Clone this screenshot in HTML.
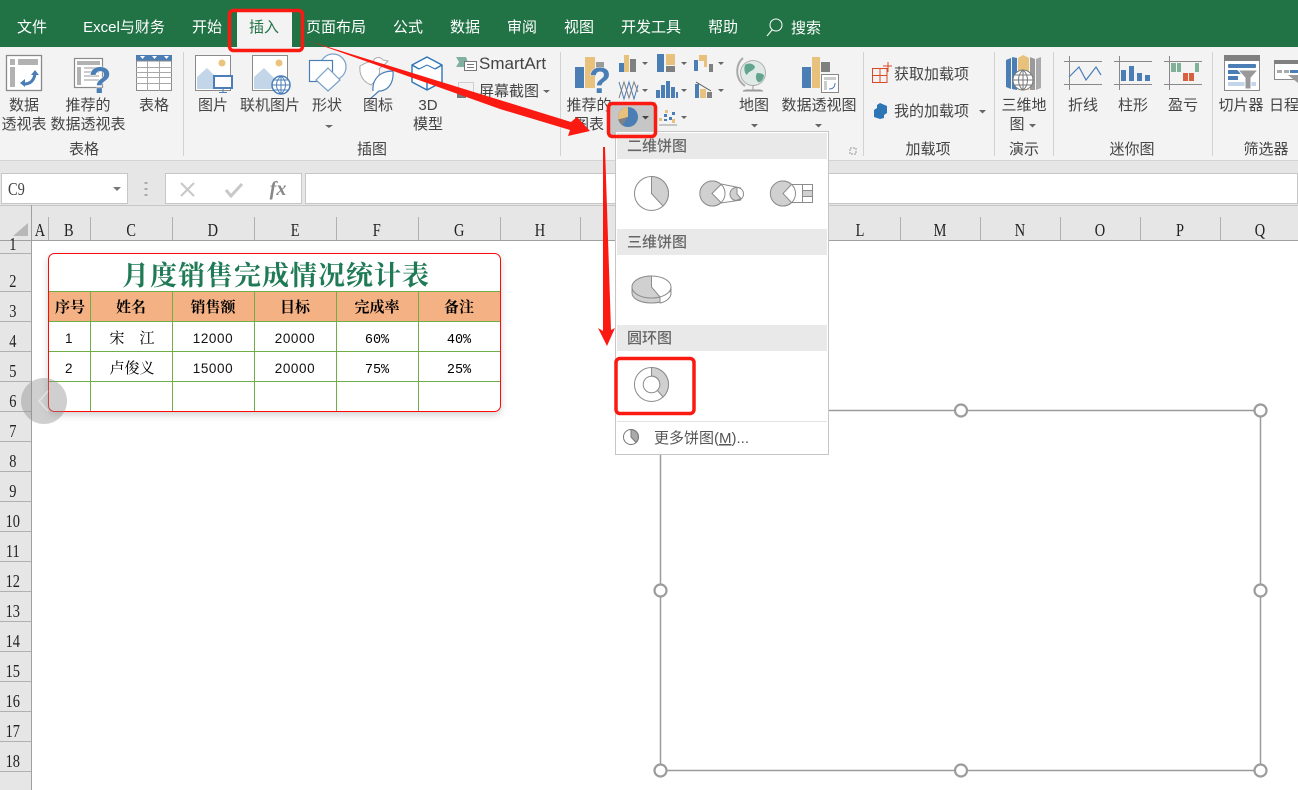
<!DOCTYPE html>
<html><head><meta charset="utf-8"><style>
html,body{margin:0;padding:0;background:#fff;width:1298px;height:790px;overflow:hidden}
svg{display:block}
text{font-family:"Liberation Sans","Noto Sans CJK SC",sans-serif;font-size:15px;fill:#444;text-anchor:middle}
.t{fill:#fff;font-size:15px}
.r{font-size:15px;fill:#444}
.s{font-family:"Liberation Serif","Noto Serif CJK SC",serif;font-size:18px;fill:#222}
.b{font-family:"Liberation Serif","Noto Serif CJK SC",serif;font-size:15px;fill:#000}
.n{font-size:13.5px;fill:#111;letter-spacing:.6px}
.d{font-family:"Liberation Mono",monospace;font-size:13.5px;fill:#000}
.h{font-family:"Liberation Serif","Noto Serif CJK SC",serif;font-size:15px;font-weight:700;fill:#000}
.m{font-size:15px;fill:#666;text-anchor:start;font-weight:500}
.l{text-anchor:start}
</style></head><body>
<svg width="1298" height="790" viewBox="0 0 1298 790" xmlns="http://www.w3.org/2000/svg">
<rect width="1298" height="790" fill="#fff"/>
<rect width="1298" height="47" fill="#217346"/>
<rect y="47" width="1298" height="113" fill="#f3f3f3"/>
<rect y="160" width="1298" height="45" fill="#e6e6e6"/>
<line x1="0" x2="1298" y1="160.500" y2="160.500" stroke="#d4d4d4"/>
<rect x="237" y="12" width="55" height="35" fill="#f3f3f3"/>

<!-- tabs -->
<text class="t" x="32" y="32">文件</text>
<text class="t" x="124" y="32">Excel与财务</text>
<text class="t" x="207" y="32">开始</text>
<text class="t" x="264" y="32" style="fill:#217346">插入</text>
<text class="t" x="336" y="32">页面布局</text>
<text class="t" x="408" y="32">公式</text>
<text class="t" x="465" y="32">数据</text>
<text class="t" x="522" y="32">审阅</text>
<text class="t" x="579" y="32">视图</text>
<text class="t" x="651" y="32">开发工具</text>
<text class="t" x="723" y="32">帮助</text>
<circle cx="776" cy="25" r="6" fill="none" stroke="#fff"/><line x1="772" y1="30" x2="767" y2="36" stroke="#fff"/>
<text class="t" x="806" y="33">搜索</text>

<!-- group separators -->
<g stroke="#d2d2d2"><line x1="183.500" x2="183.500" y1="52" y2="156"/><line x1="560.500" x2="560.500" y1="52" y2="156"/><line x1="863.500" x2="863.500" y1="52" y2="156"/><line x1="994.500" x2="994.500" y1="52" y2="156"/><line x1="1053.500" x2="1053.500" y1="52" y2="156"/><line x1="1212.500" x2="1212.500" y1="52" y2="156"/></g>

<!-- 数据透视表 icon -->
<rect x="6.500" y="55.500" width="35" height="35" fill="#fff" stroke="#8a8a8a" stroke-width="1.300"/>
<rect x="10" y="59" width="5" height="6" fill="#b2b2b2"/><rect x="18" y="59" width="20" height="6" fill="#b2b2b2"/><rect x="10" y="67" width="5" height="20" fill="#b2b2b2"/>
<path d="M24 84c7 0 10-4 11-10" fill="none" stroke="#4a7eb5" stroke-width="3"/><path d="M31 75l4-5 4 5zM20 83l5-4v8z" fill="#4a7eb5"/>
<!-- 推荐 icon -->
<rect x="74.500" y="58.500" width="28" height="29" fill="#fff" stroke="#8a8a8a" stroke-width="1.200"/>
<rect x="77" y="61" width="23" height="4" fill="#b2b2b2"/><rect x="77" y="67" width="4" height="18" fill="#b2b2b2"/><path d="M84 68h15M84 72h15M84 76h15M84 80h15" stroke="#ccc" stroke-width="2"/>
<text x="100" y="93" style="font-size:37px;font-weight:700;fill:#4a7eb5;stroke:#f3f3f3;stroke-width:1;paint-order:stroke">?</text>
<!-- 表格 icon -->
<rect x="136" y="55" width="36" height="6" fill="#4a7eb5"/>
<rect x="136.500" y="61" width="35" height="29.500" fill="#fff" stroke="#8a8a8a"/>
<path d="M136 67.500h36M136 72.500h36M136 77.500h36M136 83.500h36M147.500 61v30M159.500 61v30" stroke="#a8a8a8" fill="none"/>
<path d="M140 56h5l-2.500 3zM152 56h5l-2.500 3zM164 56h5l-2.500 3z" fill="#fff"/>

<!-- 图片 icon -->
<rect x="195.500" y="55.500" width="35" height="35" fill="#fff" stroke="#8a8a8a"/>
<path d="M197 89V77l10-9 12 12v9z" fill="#c3d5e8"/><circle cx="222" cy="63" r="3.500" fill="#ecc37e"/>
<rect x="214" y="76" width="18" height="12" fill="#fff" stroke="#4a7eb5" stroke-width="2"/><path d="M223 89v3M219 92.500h8" stroke="#4a7eb5"/>
<!-- 联机图片 -->
<rect x="252.500" y="55.500" width="35" height="35" fill="#fff" stroke="#8a8a8a"/>
<path d="M254 89V77l10-9 12 12v9z" fill="#c3d5e8"/><circle cx="279" cy="63" r="3.500" fill="#ecc37e"/>
<circle cx="281" cy="85" r="9" fill="#fff" stroke="#4a7eb5" stroke-width="1.500"/><path d="M272 85h18M274 80h14M274 90h14M281 76v18M281 76c-6 5-6 13 0 18M281 76c6 5 6 13 0 18" stroke="#4a7eb5" fill="none"/>
<!-- 形状 -->
<circle cx="333" cy="67" r="13" fill="#fff" stroke="#7ba0c8" stroke-width="1.200"/>
<rect x="309.500" y="60.500" width="23" height="21" fill="#fff" stroke="#4a7eb5" stroke-width="1.200"/>
<path d="M328 68l12 12-12 11-12-11z" fill="#fff" stroke="#7ba0c8" stroke-width="1.200"/>
<path d="M325 125l4 3 4-3z" fill="#666"/>
<!-- 图标 -->
<path d="M360 66c-1 10 4 16 11 19l4-4c5-6 5-10 4-12l6-5 3-3-5-1c-3-4-9-3-10 2-3-1-8 1-13 4z" fill="#fff" stroke="#aaa"/>
<path d="M373 91c-1-11 6-20 20-20 1 12-5 20-14 20l-9 8" fill="#fff" stroke="#4a7eb5" stroke-width="1.200"/>
<!-- 3D -->
<path d="M427 57l15 8v17l-15 8-15-8V65z M412 65l7 4M442 65l-7 4M427 82v8" fill="#fff" stroke="#2e75b6" stroke-width="1.400" stroke-linejoin="round"/>
<path d="M419 69l8-4 8 4" fill="none" stroke="#2e75b6" stroke-width="1"/>
<!-- SmartArt -->
<path d="M456 57h10l2 5-2 5h-10l3-5z" fill="#7fb0a0"/><rect x="464.500" y="61.500" width="12" height="9" fill="#fff" stroke="#777"/><path d="M467 64.500h7M467 67.500h7" stroke="#777"/>
<text class="r l" x="479" y="69" style="font-size:17px">SmartArt</text>
<rect x="458.500" y="82.500" width="15" height="14" fill="none" stroke="#aaa" stroke-dasharray="1 1"/>
<rect x="457" y="93" width="9" height="5" fill="#777"/>
<text class="r l" x="479" y="96">屏幕截图</text><path d="M543 90l3.500 3 3.500-3z" fill="#666"/>

<!-- ribbon labels -->
<text class="r" x="24" y="110">数据</text><text class="r" x="24" y="129">透视表</text>
<text class="r" x="88" y="110">推荐的</text><text class="r" x="88" y="129">数据透视表</text>
<text class="r" x="154" y="110">表格</text>
<text class="r" x="213" y="110">图片</text>
<text class="r" x="270" y="110">联机图片</text>
<text class="r" x="327" y="110">形状</text>
<text class="r" x="378" y="110">图标</text>
<text class="r" x="428" y="110">3D</text><text class="r" x="428" y="129">模型</text>
<text class="r" x="84" y="154">表格</text>
<text class="r" x="372" y="154">插图</text>

<!-- chart group -->
<rect x="575" y="67" width="9" height="21" fill="#4a7eb5"/><rect x="585" y="57" width="10" height="31" fill="#e8c27d"/><rect x="596" y="62" width="8" height="6" fill="#9a9a9a"/>
<text x="600" y="93" style="font-size:36px;font-weight:700;fill:#4a7eb5;stroke:#f3f3f3;stroke-width:1;paint-order:stroke">?</text>
<!-- small charts -->
<path d="M619 63h5v9h-5z" fill="#4a7eb5"/><path d="M624 55h5v17h-5z" fill="#e8c27d"/><path d="M630 59h6v13h-6z" fill="#808080"/>
<path d="M657 54h7v18h-7z" fill="#4a7eb5"/><path d="M666 54h9v11h-9z" fill="#e8c27d"/><path d="M666 66h9v6h-9z" fill="#808080"/>
<path d="M694 60h4v11h-4z" fill="#4a7eb5"/><path d="M699 55h5v6h-5zM704 55h3v12h-3z" fill="#e8c27d"/><path d="M709 64h4v8h-4z" fill="#808080"/>
<path d="M619 82l5 17 5-17 5 17 4-14" fill="none" stroke="#4a7eb5"/><path d="M619 98l5-16 5 16 5-16 4 10" fill="none" stroke="#808080"/>
<path d="M656 90h4v8h-4zM661 85h4v13h-4zM666 81h4v17h-4zM671 87h4v11h-4zM676 92h2v6h-2z" fill="#4a7eb5"/>
<path d="M695 84h4v14h-4z" fill="#4a7eb5"/><path d="M700 89h6v9h-6z" fill="#e8c27d"/><path d="M707 92h5v6h-5z" fill="#808080"/><path d="M696 82l15 9" stroke="#555"/>
<g fill="#666"><path d="M642 62h6l-3 3zM681 62h6l-3 3zM718 62h6l-3 3zM642 89h6l-3 3zM681 89h6l-3 3zM718 89h6l-3 3z"/></g>
<!-- scatter -->
<path d="M664 114h3v3h-3zM669 117h3v3h-3zM672 112h3v3h-3zM664 119h3v2h-3z" fill="#4a7eb5"/><path d="M659 118h3v3h-3zM665 110h3v3h-3zM672 119h3v4h-3z" fill="#e8c27d"/><path d="M659 125h18" stroke="#999"/>
<path d="M681 116h6l-3 3z" fill="#666"/>
<!-- pie highlighted -->
<rect x="608" y="102" width="48" height="35" fill="#c6c6c6"/>
<circle cx="628" cy="117" r="10" fill="#4a7eb5"/>
<path d="M628 117V107a10 10 0 0 0-9.600 12.500z" fill="#e8c27d"/><path d="M628 117l-9.600 2.500a10 10 0 0 0 4 5.800z" fill="#808080"/>
<path d="M642 116h7l-3.500 3.500z" fill="#444"/>
<text class="r" x="589" y="110">推荐的</text><text class="r" x="589" y="129">图表</text>

<!-- globe -->
<circle cx="753" cy="73" r="12.500" fill="#dfe9e6" stroke="#b0b0b0"/><path d="M745 65c4-3 9-1 10 2-1 4-7 4-8 8-3-2-3-7-2-10zM757 73c4 0 7 1 7 3-1 5-5 7-6 6-2-2-3-5-1-9z" fill="#62a58e"/>
<path d="M743 58c-7 6-9 20 2 28" fill="none" stroke="#aaa" stroke-width="2"/>
<path d="M746 90h14l3 1h-20zM753 85v5" stroke="#999" fill="#aaa"/>
<text class="r" x="754" y="110">地图</text><path d="M751 124h7l-3.500 3.500z" fill="#666"/>
<!-- pivot chart -->
<rect x="802" y="67" width="9" height="21" fill="#4a7eb5"/><rect x="812" y="57" width="8" height="31" fill="#e8c27d"/><rect x="821" y="62" width="9" height="10" fill="#808080"/>
<rect x="821.500" y="74.500" width="17" height="18" fill="#fff" stroke="#888"/><path d="M824 77h12v3h-12zM824 81h3v9h-3z" fill="#ccc"/><path d="M829 89c4 0 6-2 6-6" stroke="#4a7eb5" fill="none"/>
<text class="r" x="819" y="110">数据透视图</text><path d="M815 124h7l-3.500 3.500z" fill="#666"/>
<path d="M850 148h6v6h-6z" fill="none" stroke="#999" stroke-dasharray="2 1"/>

<!-- add-ins -->
<path d="M872 68.500h15M872.500 68v15M872 75.500h15M880 68v15M872 82.500h15M887 68v15M888 62v10M883 66h9" stroke="#d8492a" fill="none"/>
<text class="r l" x="894" y="79">获取加载项</text>
<path d="M880 103l7 3v7l-3 2v3l-4 1-6-2v-7l3-2v-3z" fill="#2e75b6"/>
<text class="r l" x="894" y="116">我的加载项</text><path d="M979 110h7l-3.500 3.500z" fill="#666"/>
<text class="r" x="928" y="154">加载项</text>

<!-- 3D map -->
<path d="M1006 60l5-2v31l-5-2z" fill="#4a7eb5"/><path d="M1012 57l5 1v32l-5-1z" fill="#4a7eb5"/><path d="M1018 58l5-3 6 3v32h-11z" fill="#e8c27d"/><path d="M1030 57l5 2v31h-5z" fill="#9a9a9a"/><path d="M1036 59l5-2v31l-5 2z" fill="#aaa"/>
<circle cx="1023" cy="80" r="10" fill="#fff" stroke="#777"/><path d="M1013 80h20M1015 75h16M1015 85h16M1023 70v20M1023 70c-6 5-6 15 0 20M1023 70c6 5 6 15 0 20" stroke="#777" fill="none"/>
<text class="r" x="1024" y="110">三维地</text><text class="r" x="1017" y="129">图</text><path d="M1029 124h7l-3.500 3.500z" fill="#666"/>
<text class="r" x="1024" y="154">演示</text>

<!-- sparklines -->
<g stroke="#888" fill="none">
<path d="M1064 61.500h38M1064 84.500h38M1069.500 56v34M1114 61.500h38M1114 84.500h38M1119.500 56v34M1164 61.500h38M1164 84.500h38M1169.500 56v34"/>
</g>
<path d="M1069 77l10-10 7 13 10-13 5 8" fill="none" stroke="#4a7eb5" stroke-width="1.200"/>
<path d="M1121 70h5v11h-5zM1129 66h5v15h-5zM1137 73h5v8h-5zM1145 75h5v6h-5z" fill="#4a7eb5"/>
<path d="M1171 63h5v9h-5zM1177 63h4v9h-4zM1195 63h4v9h-4z" fill="#7fb098"/><path d="M1183 73h5v8h-5zM1189 73h5v8h-5z" fill="#d8603c"/>
<text class="r" x="1083" y="110">折线</text><text class="r" x="1133" y="110">柱形</text><text class="r" x="1183" y="110">盈亏</text>
<text class="r" x="1132" y="154">迷你图</text>
<!-- slicer -->
<rect x="1224.500" y="55.500" width="35" height="35" fill="#fff" stroke="#8a8a8a"/><rect x="1224" y="55" width="36" height="6" fill="#808080"/>
<rect x="1228" y="64" width="28" height="4" rx="1" fill="#4a7eb5"/><rect x="1228" y="70" width="15" height="4" fill="#4a7eb5"/><rect x="1228" y="76" width="10" height="4" fill="#4a7eb5"/><rect x="1228" y="82" width="28" height="4" fill="#c3d5e8"/>
<path d="M1238 70h20l-7 8v11h-6V78z" fill="#999" stroke="#fff"/>
<text class="r" x="1241" y="110">切片器</text>
<rect x="1274.500" y="61.500" width="24" height="18" fill="#fff" stroke="#8a8a8a"/><rect x="1274" y="60" width="24" height="4" fill="#808080"/><path d="M1277 70h5v3h-5zM1284 70h5v3h-5z" fill="#aaa"/><path d="M1290 70h8v3h-8z" fill="#4a7eb5"/><path d="M1288 75h10v8z" fill="#999"/>
<text class="r l" x="1269" y="110">日程</text>
<text class="r" x="1266" y="154">筛选器</text>

<!-- formula bar -->
<rect x="1.500" y="173.500" width="126" height="30" fill="#fff" stroke="#c6c6c6"/>
<g transform="scale(.8 1)"><text class="s l" x="10" y="195" style="font-size:18px;fill:#444">C9</text></g>
<path d="M113 187h8l-4 4z" fill="#777"/>
<path d="M146 182v2M146 188v2M146 194v2" stroke="#aaa" stroke-width="3"/>
<rect x="165.500" y="173.500" width="136" height="30" fill="#fff" stroke="#c6c6c6"/>
<path d="M181 183l13 13M194 183l-13 13" stroke="#c8c8c8" stroke-width="2"/>
<path d="M226 190l5 6 11-12" fill="none" stroke="#c8c8c8" stroke-width="3"/>
<text x="278" y="195" style="font-family:'Liberation Serif',serif;font-style:italic;font-weight:700;font-size:20px;fill:#888">fx</text>
<rect x="305.500" y="173.500" width="992" height="30" fill="#fff" stroke="#c6c6c6"/>

<!-- column header -->
<rect y="205" width="1298" height="35" fill="#e6e6e6"/>
<line x1="0" x2="1298" y1="240.500" y2="240.500" stroke="#a0a0a0"/>
<line x1="0" x2="1298" y1="205.500" y2="205.500" stroke="#c6c6c6"/>
<path d="M13 236l15-13v13z" fill="#b8b8b8"/>
<path d="M31.500 217v23M48.500 217v23M90.500 217v23M172.500 217v23M254.500 217v23M336.500 217v23M418.500 217v23M500.500 217v23M580.500 217v23M660.500 217v23M740.500 217v23M820.500 217v23M900.500 217v23M980.500 217v23M1060.500 217v23M1140.500 217v23M1220.500 217v23" stroke="#b0b0b0"/>
<g transform="scale(.8 1)">
<text class="s" x="50" y="236">A</text><text class="s" x="86" y="236">B</text><text class="s" x="164" y="236">C</text><text class="s" x="266" y="236">D</text><text class="s" x="369" y="236">E</text><text class="s" x="471" y="236">F</text><text class="s" x="574" y="236">G</text><text class="s" x="675" y="236">H</text><text class="s" x="1075" y="236">L</text><text class="s" x="1175" y="236">M</text><text class="s" x="1275" y="236">N</text><text class="s" x="1375" y="236">O</text><text class="s" x="1475" y="236">P</text><text class="s" x="1575" y="236">Q</text>
</g>
<!-- row header -->
<rect y="241" width="32" height="549" fill="#e6e6e6"/>
<line x1="31.500" x2="31.500" y1="205" y2="790" stroke="#a0a0a0"/>
<path d="M0 253.500h31M0 291.500h31M0 321.500h31M0 351.500h31M0 381.500h31M0 411.500h31M0 441.500h31M0 471.500h31M0 501.500h31M0 531.500h31M0 561.500h31M0 591.500h31M0 621.500h31M0 651.500h31M0 681.500h31M0 711.500h31M0 741.500h31M0 771.500h31" stroke="#b0b0b0"/>
<g transform="scale(.8 1)">
<text class="s" x="16" y="250">1</text><text class="s" x="16" y="287">2</text><text class="s" x="16" y="317">3</text><text class="s" x="16" y="347">4</text><text class="s" x="16" y="377">5</text><text class="s" x="16" y="407">6</text><text class="s" x="16" y="437">7</text><text class="s" x="16" y="467">8</text><text class="s" x="16" y="497">9</text><text class="s" x="16" y="527">10</text><text class="s" x="16" y="557">11</text><text class="s" x="16" y="587">12</text><text class="s" x="16" y="617">13</text><text class="s" x="16" y="647">14</text><text class="s" x="16" y="677">15</text><text class="s" x="16" y="707">16</text><text class="s" x="16" y="737">17</text><text class="s" x="16" y="767">18</text>
</g>

<!-- table -->
<defs><filter id="sh" x="-5%" y="-10%" width="110%" height="125%"><feDropShadow dx="0" dy="3" stdDeviation="4" flood-color="#000" flood-opacity=".2"/></filter></defs>
<rect x="48.500" y="253.500" width="452" height="158" rx="6" fill="#fff" filter="url(#sh)"/>
<rect x="49" y="292" width="451" height="30" fill="#f4b183"/>
<path d="M49 291.500h451M49 321.500h451M49 351.500h451M49 381.500h451M90.500 292v119M172.500 292v119M254.500 292v119M336.500 292v119M418.500 292v119" stroke="#70ad47" fill="none"/>
<rect x="48.500" y="253.500" width="452" height="158" rx="6" fill="none" stroke="#fb0a0a"/>
<text x="276" y="285" style="font-family:'Liberation Serif','Noto Serif CJK SC',serif;font-size:27px;font-weight:700;fill:#1f7a55;letter-spacing:1px">月度销售完成情况统计表</text>
<text class="h" x="70" y="312">序号</text><text class="h" x="131" y="312">姓名</text><text class="h" x="213" y="312">销售额</text><text class="h" x="295" y="312">目标</text><text class="h" x="377" y="312">完成率</text><text class="h" x="459" y="312">备注</text>
<text class="n" x="69" y="343">1</text><text class="b" x="132" y="343" xml:space="preserve">宋　江</text><text class="n" x="213" y="343">12000</text><text class="n" x="295" y="343">20000</text><text class="d" x="377" y="343">60%</text><text class="d" x="459" y="343">40%</text>
<text class="n" x="69" y="373">2</text><text class="b" x="132" y="373">卢俊义</text><text class="n" x="213" y="373">15000</text><text class="n" x="295" y="373">20000</text><text class="d" x="377" y="373">75%</text><text class="d" x="459" y="373">25%</text>
<!-- floating back button -->
<circle cx="44" cy="401" r="23" fill="#8c8c8c" fill-opacity=".42"/>
<path d="M48 391l-9 10 9 10" fill="none" stroke="#fff" stroke-opacity=".45" stroke-width="1.500"/>

<!-- chart placeholder -->
<rect x="660.500" y="410.500" width="600" height="360" fill="#fff" stroke="#9c9c9c" stroke-width="1.500"/>
<g fill="#fff" stroke="#9c9c9c" stroke-width="2.200"><circle cx="961" cy="410.500" r="6"/><circle cx="1260.500" cy="410.500" r="6"/><circle cx="660.500" cy="590.500" r="6"/><circle cx="1260.500" cy="590.500" r="6"/><circle cx="660.500" cy="770.500" r="6"/><circle cx="961" cy="770.500" r="6"/><circle cx="1260.500" cy="770.500" r="6"/></g>

<!-- dropdown -->
<rect x="615.500" y="131.500" width="213" height="323" fill="#fff" stroke="#c6c6c6"/>
<rect x="617" y="133" width="210" height="26" fill="#e9e9e9"/>
<rect x="617" y="229" width="210" height="26" fill="#e9e9e9"/>
<rect x="617" y="325" width="210" height="26" fill="#e9e9e9"/>
<text class="m" x="627" y="151">二维饼图</text><text class="m" x="627" y="247">三维饼图</text><text class="m" x="627" y="343">圆环图</text>
<g stroke="#8c8c8c" stroke-width="1">
<circle cx="651.500" cy="193.500" r="17" fill="#fff"/><path d="M651.500 176.500a17 17 0 0 1 11.500 29.500L651.500 193.500z" fill="#d0d0d0"/>
<!-- pie of pie -->
<circle cx="712.500" cy="193.500" r="12.500" fill="#fff"/>
<path d="M721 184.500a12.500 12.500 0 1 0 0 18L712 193.500z" fill="#d0d0d0"/>
<path d="M721 184l20 4M721 203l20-3" fill="none"/>
<circle cx="737" cy="194" r="6.500" fill="#fff"/><path d="M737 187.500a6.500 6.500 0 0 0-1 13l5-2-4-4.500z" fill="#d0d0d0"/>
<!-- bar of pie -->
<circle cx="783" cy="193.500" r="12.500" fill="#fff"/>
<path d="M791.500 184.500a12.500 12.500 0 1 0 0 18L783 193.500z" fill="#d0d0d0"/>
<path d="M792 184.500h20.500v18H792" fill="none"/><rect x="802.500" y="184.500" width="10" height="6" fill="#fff"/><rect x="802.500" y="190.500" width="10" height="6" fill="#d0d0d0"/><rect x="802.500" y="196.500" width="10" height="6" fill="#fff"/>
<!-- 3D pie -->
<path d="M632 287v6c0 6 9 10 19.500 10s19.500-4 19.500-10v-6z" fill="#d0d0d0"/><path d="M660 303v-7l11-5v2c0 5-5 9-11 10z" fill="#fff"/>
<ellipse cx="651.500" cy="287" rx="19.500" ry="11" fill="#fff"/><path d="M651.500 276v11l8.500 10c-3 .7-6 1-8.500 1-11 0-19.500-5-19.500-11s8.500-11 19.500-11z" fill="#d0d0d0"/>
<!-- donut -->
<circle cx="651.500" cy="384.500" r="17" fill="#fff"/><path d="M651.500 367.500a17 17 0 0 1 11.500 29.500L657 390a8 8 0 0 0-5.500-14z" fill="#d0d0d0"/><circle cx="651.500" cy="384.500" r="8.300" fill="#fff"/>
</g>
<line x1="617" x2="827" y1="421.500" y2="421.500" stroke="#e2e2e2"/>
<circle cx="631" cy="437" r="7.500" fill="#fff" stroke="#777"/><path d="M631 429.500a7.500 7.500 0 0 1 5 13L631 437z" fill="#aaa" stroke="#777"/>
<text class="l" x="654" y="443" style="fill:#555">更多饼图(<tspan text-decoration="underline">M</tspan>)...</text>

<!-- red annotations -->
<g fill="none" stroke="#fb1a12" stroke-width="3.500"><rect x="229.500" y="10.500" width="73" height="40" rx="4"/><rect x="608.500" y="103.500" width="47" height="33" rx="4"/><rect x="616" y="358.500" width="78" height="55" rx="4"/></g>
<path d="M309 41L571 122 577 117 590 131 568 136 570 130 500 109z" fill="#fb1a12"/>
<path d="M603 147h2L611 330 615 328 607 346 598 328 603 331z" fill="#fb1a12"/>
</svg>
</body></html>
